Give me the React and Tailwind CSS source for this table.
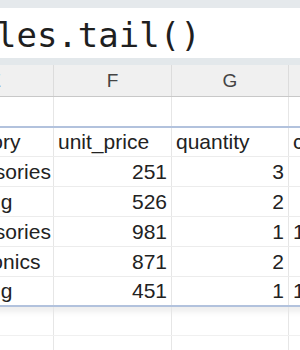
export default function App() {
  const rows = [
    ["accessories", "251", "3", ""],
    ["clothing", "526", "2", ""],
    ["accessories", "981", "1", "1"],
    ["electronics", "871", "2", ""],
    ["clothing", "451", "1", "1"],
  ];
  const cell = "border-r border-[#e6e6e6] px-[4px] flex items-center overflow-hidden whitespace-nowrap";
  return (
    <div className="w-[300px] h-[350px] overflow-hidden bg-white relative" style={{ fontFamily: '"Liberation Sans", Arial, sans-serif' }}>
      <div className="h-[8px] bg-[#e5e9ec]" />
      <div className="h-[50px] bg-white overflow-hidden whitespace-nowrap">
        <div
          className="ml-[-45px] pt-[3px] leading-[48px] text-[34px] text-[#1f1f1f]"
          style={{ fontFamily: '"DejaVu Sans Mono", monospace' }}
        >
          sales.tail()
        </div>
      </div>
      <div className="h-[7px] bg-[#e3e8eb]" />
      <div className="ml-[-64px] w-[480px]">
        <div className="grid grid-cols-[118px_118px_117px_118px] h-[32px] bg-[#f0f0f0] border-b border-[#c8c8c8] text-[19px] text-[#444]">
          <div className="border-r border-[#dcdcdc] flex items-center justify-center pt-[2px]">E</div>
          <div className="border-r border-[#dcdcdc] flex items-center justify-center pt-[2px]">F</div>
          <div className="border-r border-[#dcdcdc] flex items-center justify-center pt-[2px]">G</div>
          <div className="flex items-center justify-center pt-[2px]">H</div>
        </div>
        <div className="grid grid-cols-[118px_118px_117px_118px] h-[29px]">
          <div className={cell} />
          <div className={cell} />
          <div className={cell} />
          <div className={cell} />
        </div>
        <div className="border-t-2 border-b-2 border-[#b2c2dd] shadow-[0_5px_6px_rgba(0,0,0,0.07)] text-[21px] text-[#222]">
          <div className="grid grid-cols-[118px_118px_117px_118px] h-[29px] border-b border-[#ececec]">
            <div className={cell}>category</div>
            <div className={cell}>unit_price</div>
            <div className={cell}>quantity</div>
            <div className={cell}>customer</div>
          </div>
          {rows.map((r, i) => (
            <div
              key={i}
              className={
                "grid grid-cols-[118px_118px_117px_118px] " +
                (i === rows.length - 1 ? "h-[28px]" : "h-[30px] border-b border-[#ececec]")
              }
            >
              <div className={cell}>{r[0]}</div>
              <div className={cell + " justify-end"}>{r[1]}</div>
              <div className={cell + " justify-end"}>{r[2]}</div>
              <div className={cell}>{r[3]}</div>
            </div>
          ))}
        </div>
        {[0, 1].map((k) => (
          <div key={k} className="grid grid-cols-[118px_118px_117px_118px] h-[29px] border-b border-[#f0f0f0]">
            <div className={cell} />
            <div className={cell} />
            <div className={cell} />
            <div className={cell} />
          </div>
        ))}
      </div>
    </div>
  );
}
